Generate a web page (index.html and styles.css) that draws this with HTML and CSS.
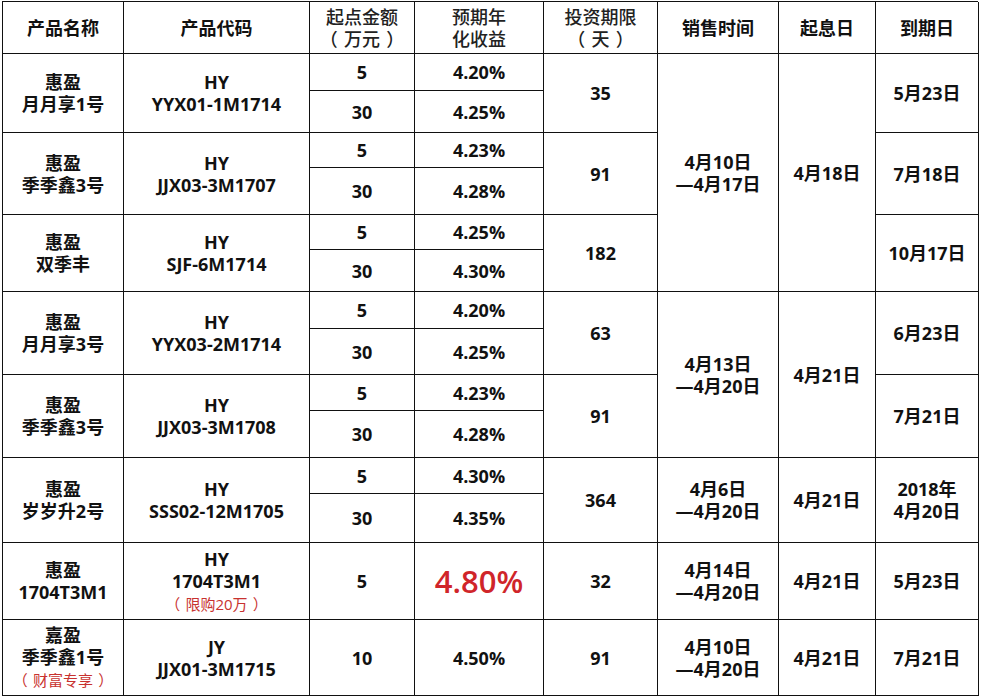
FILE: index.html
```html
<!DOCTYPE html>
<html lang="zh-CN">
<head>
<meta charset="utf-8">
<title>理财产品</title>
<link rel="stylesheet" href="styles.css">
</head>
<body>
<div class="grid">
  <div class="c hd">产品名称</div>
  <div class="c hd">产品代码</div>
  <div class="c hd light"><div>起点金额<br><span class="po">（</span>万元<span class="pc">）</span></div></div>
  <div class="c hd light">预期年<br>化收益</div>
  <div class="c hd light"><div>投资期限<br><span class="po">（</span>天<span class="pc">）</span></div></div>
  <div class="c hd">销售时间</div>
  <div class="c hd">起息日</div>
  <div class="c hd">到期日</div>

  <div class="c s2">惠盈<br>月月享1号</div>
  <div class="c s2">HY<br>YYX01-1M1714</div>
  <div class="c">5</div>
  <div class="c">4.20%</div>
  <div class="c s2">35</div>
  <div class="c s6">4月10日<br>—4月17日</div>
  <div class="c s6">4月18日</div>
  <div class="c s2">5月23日</div>
  <div class="c">30</div>
  <div class="c">4.25%</div>

  <div class="c s2">惠盈<br>季季鑫3号</div>
  <div class="c s2">HY<br>JJX03-3M1707</div>
  <div class="c">5</div>
  <div class="c">4.23%</div>
  <div class="c s2">91</div>
  <div class="c s2">7月18日</div>
  <div class="c">30</div>
  <div class="c">4.28%</div>

  <div class="c s2">惠盈<br>双季丰</div>
  <div class="c s2">HY<br>SJF-6M1714</div>
  <div class="c">5</div>
  <div class="c">4.25%</div>
  <div class="c s2">182</div>
  <div class="c s2">10月17日</div>
  <div class="c">30</div>
  <div class="c">4.30%</div>

  <div class="c s2">惠盈<br>月月享3号</div>
  <div class="c s2">HY<br>YYX03-2M1714</div>
  <div class="c">5</div>
  <div class="c">4.20%</div>
  <div class="c s2">63</div>
  <div class="c s4">4月13日<br>—4月20日</div>
  <div class="c s4">4月21日</div>
  <div class="c s2">6月23日</div>
  <div class="c">30</div>
  <div class="c">4.25%</div>

  <div class="c s2">惠盈<br>季季鑫3号</div>
  <div class="c s2">HY<br>JJX03-3M1708</div>
  <div class="c">5</div>
  <div class="c">4.23%</div>
  <div class="c s2">91</div>
  <div class="c s2">7月21日</div>
  <div class="c">30</div>
  <div class="c">4.28%</div>

  <div class="c s2">惠盈<br>岁岁升2号</div>
  <div class="c s2">HY<br>SSS02-12M1705</div>
  <div class="c">5</div>
  <div class="c">4.30%</div>
  <div class="c s2">364</div>
  <div class="c s2">4月6日<br>—4月20日</div>
  <div class="c s2">4月21日</div>
  <div class="c s2">2018年<br>4月20日</div>
  <div class="c">30</div>
  <div class="c">4.35%</div>

  <div class="c">惠盈<br>1704T3M1</div>
  <div class="c"><div>HY<br>1704T3M1<br><span class="note"><span class="po">（</span>限购20万<span class="pc">）</span></span></div></div>
  <div class="c">5</div>
  <div class="c"><span class="big">4.80%</span></div>
  <div class="c">32</div>
  <div class="c">4月14日<br>—4月20日</div>
  <div class="c">4月21日</div>
  <div class="c">5月23日</div>

  <div class="c"><div>嘉盈<br>季季鑫1号<br><span class="note"><span class="po">（</span>财富专享<span class="pc">）</span></span></div></div>
  <div class="c">JY<br>JJX01-3M1715</div>
  <div class="c">10</div>
  <div class="c">4.50%</div>
  <div class="c">91</div>
  <div class="c">4月10日<br>—4月20日</div>
  <div class="c">4月21日</div>
  <div class="c">7月21日</div>
</div>
</body>
</html>
```
FILE: styles.css
```css
html, body {
  margin: 0;
  background: #fff;
}
body {
  padding: 1px 0 0 2px;
  font-family: "Open Sans", "Noto Sans CJK SC", sans-serif;
  color: #111;
}
.grid {
  display: grid;
  width: 976px;
  grid-template-columns: 121px 186px 105px 129px 114px 121px 97px 103px;
  grid-template-rows: 52px 37px 42px 35px 47px 35px 42px 37px 46px 36px 47px 36px 49px 77px 76px;
  border-left: 1px solid #111;
  border-top: 1px solid #111;
  box-sizing: border-box;
}
.c {
  border-right: 1px solid #111;
  border-bottom: 1px solid #111;
  display: flex;
  align-items: center;
  justify-content: center;
  text-align: center;
  font-size: 18px;
  line-height: 22px;
  font-weight: 700;
}
.hd {
  font-weight: 700;
}
.light {
  font-weight: 500;
  color: #222;
}
.po {
  padding-right: 0.35em;
}
.pc {
  padding-left: 0.35em;
}
.s2 { grid-row: span 2; }
.s4 { grid-row: span 4; }
.s6 { grid-row: span 6; }
.note {
  color: #c8322f;
  font-weight: 400;
  font-size: 15px;
  line-height: 21px;
}
.big {
  color: #d0252a;
  font-size: 31px;
  line-height: 34px;
  font-weight: 600;
}
```
